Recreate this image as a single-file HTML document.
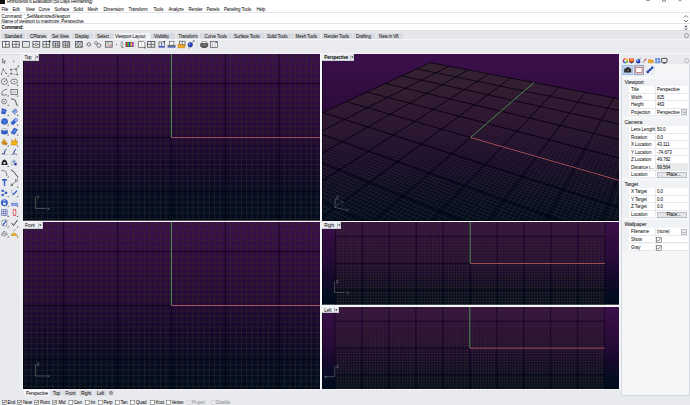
<!DOCTYPE html><html><head><meta charset="utf-8"><style>

*{margin:0;padding:0;box-sizing:border-box}
html,body{width:690px;height:405px;overflow:hidden;background:#e9eaee;font-family:"Liberation Sans",sans-serif;color:#222}
.ab{position:absolute}
.t{position:absolute;white-space:nowrap;font-size:4.3px;line-height:6px;color:#000}
svg{position:absolute;display:block}

</style></head><body>
<div class="ab" style="left:0px;top:0px;width:690px;height:31px;background:#ffffff;"></div>
<div class="ab" style="left:0px;top:0px;width:4.6px;height:3.6px;background:#111;"></div>
<div class="t" style="left:7px;top:-0.7px;font-size:4.5px;color:#000;letter-spacing:-0.16px">Rhinoceros 6 Evaluation (59 Days Remaining)</div>
<svg class="ab" style="left:640px;top:0" width="50" height="4" viewBox="0 0 50 4"><path d="M6 0.3H10" stroke="#333" stroke-width="0.6"/><path d="M22.5 -2V1.2H25.5V-2" stroke="#333" stroke-width="0.6" fill="none"/><path d="M38.6 -1.5L41.4 1.3M41.4 -1.5L38.6 1.3" stroke="#333" stroke-width="0.6"/></svg>
<div class="t" style="left:1.5px;top:6.5px;font-size:4.5px;color:#000;letter-spacing:-0.14px">File</div>
<div class="t" style="left:12.5px;top:6.5px;font-size:4.5px;color:#000;letter-spacing:-0.14px">Edit</div>
<div class="t" style="left:25.5px;top:6.5px;font-size:4.5px;color:#000;letter-spacing:-0.14px">View</div>
<div class="t" style="left:38.5px;top:6.5px;font-size:4.5px;color:#000;letter-spacing:-0.14px">Curve</div>
<div class="t" style="left:54.5px;top:6.5px;font-size:4.5px;color:#000;letter-spacing:-0.14px">Surface</div>
<div class="t" style="left:73.5px;top:6.5px;font-size:4.5px;color:#000;letter-spacing:-0.14px">Solid</div>
<div class="t" style="left:87.5px;top:6.5px;font-size:4.5px;color:#000;letter-spacing:-0.14px">Mesh</div>
<div class="t" style="left:103.5px;top:6.5px;font-size:4.5px;color:#000;letter-spacing:-0.14px">Dimension</div>
<div class="t" style="left:128.5px;top:6.5px;font-size:4.5px;color:#000;letter-spacing:-0.14px">Transform</div>
<div class="t" style="left:153.5px;top:6.5px;font-size:4.5px;color:#000;letter-spacing:-0.14px">Tools</div>
<div class="t" style="left:168.5px;top:6.5px;font-size:4.5px;color:#000;letter-spacing:-0.14px">Analyze</div>
<div class="t" style="left:188.5px;top:6.5px;font-size:4.5px;color:#000;letter-spacing:-0.14px">Render</div>
<div class="t" style="left:206.5px;top:6.5px;font-size:4.5px;color:#000;letter-spacing:-0.14px">Panels</div>
<div class="t" style="left:224.0px;top:6.5px;font-size:4.5px;color:#000;letter-spacing:-0.14px">Paneling Tools</div>
<div class="t" style="left:256.5px;top:6.5px;font-size:4.5px;color:#000;letter-spacing:-0.14px">Help</div>
<div class="ab" style="left:0px;top:11.5px;width:690px;height:0.8px;background:#e3e5ea;"></div>
<div class="t" style="left:1.5px;top:13.7px;font-size:4.5px;color:#000;letter-spacing:-0.12px">Command: '_SetMaximizedViewport</div>
<div class="t" style="left:1.5px;top:19.3px;font-size:4.5px;color:#000;letter-spacing:-0.1px">Name of viewport to maximize: Perspective</div>
<div class="ab" style="left:0px;top:23px;width:690px;height:0.7px;background:#dfe2e8;"></div>
<div class="t" style="left:1.5px;top:24.9px;font-size:4.5px;color:#000;font-weight:bold;letter-spacing:-0.2px">Command:</div>
<div class="ab" style="left:0px;top:30.2px;width:690px;height:0.8px;background:#dde0e6;"></div>
<svg class="ab" style="left:683px;top:13px" width="6" height="17" viewBox="0 0 6 17"><path d="M1 4.5 L3 2.5 L5 4.5 M1 7 L3 9 L5 7" stroke="#555" stroke-width="0.8" fill="none"/><rect x="1.5" y="12" width="3" height="5" fill="#d9dbe0"/><path d="M2 14 L3 13 L4 14 M2 15.5 L3 16.5 L4 15.5" stroke="#333" stroke-width="0.7" fill="none"/></svg>
<div class="ab" style="left:0px;top:31px;width:690px;height:8.5px;background:#e6e7eb;"></div>
<div class="ab" style="left:2px;top:33px;width:23px;height:6.5px;background:#d9dadf;border-radius:1px 1px 0 0"></div>
<div class="t" style="left:4.5px;top:33.9px;font-size:4.5px;color:#000;letter-spacing:-0.12px">Standard</div>
<div class="ab" style="left:27px;top:33px;width:21px;height:6.5px;background:#d9dadf;border-radius:1px 1px 0 0"></div>
<div class="t" style="left:30px;top:33.9px;font-size:4.5px;color:#000;letter-spacing:-0.12px">CPlanes</div>
<div class="ab" style="left:50px;top:33px;width:20px;height:6.5px;background:#d9dadf;border-radius:1px 1px 0 0"></div>
<div class="t" style="left:52px;top:33.9px;font-size:4.5px;color:#000;letter-spacing:-0.12px">Set View</div>
<div class="ab" style="left:72px;top:33px;width:21px;height:6.5px;background:#d9dadf;border-radius:1px 1px 0 0"></div>
<div class="t" style="left:75px;top:33.9px;font-size:4.5px;color:#000;letter-spacing:-0.12px">Display</div>
<div class="ab" style="left:95px;top:33px;width:21px;height:6.5px;background:#d9dadf;border-radius:1px 1px 0 0"></div>
<div class="t" style="left:97px;top:33.9px;font-size:4.5px;color:#000;letter-spacing:-0.12px">Select</div>
<div class="ab" style="left:151px;top:33px;width:24px;height:6.5px;background:#d9dadf;border-radius:1px 1px 0 0"></div>
<div class="t" style="left:154px;top:33.9px;font-size:4.5px;color:#000;letter-spacing:-0.12px">Visibility</div>
<div class="ab" style="left:177px;top:33px;width:21px;height:6.5px;background:#d9dadf;border-radius:1px 1px 0 0"></div>
<div class="t" style="left:178.5px;top:33.9px;font-size:4.5px;color:#000;letter-spacing:-0.12px">Transform</div>
<div class="ab" style="left:200px;top:33px;width:26px;height:6.5px;background:#d9dadf;border-radius:1px 1px 0 0"></div>
<div class="t" style="left:204.5px;top:33.9px;font-size:4.5px;color:#000;letter-spacing:-0.12px">Curve Tools</div>
<div class="ab" style="left:227px;top:33px;width:37px;height:6.5px;background:#d9dadf;border-radius:1px 1px 0 0"></div>
<div class="t" style="left:234px;top:33.9px;font-size:4.5px;color:#000;letter-spacing:-0.12px">Surface Tools</div>
<div class="ab" style="left:265px;top:33px;width:29px;height:6.5px;background:#d9dadf;border-radius:1px 1px 0 0"></div>
<div class="t" style="left:267px;top:33.9px;font-size:4.5px;color:#000;letter-spacing:-0.12px">Solid Tools</div>
<div class="ab" style="left:294.5px;top:33px;width:25.5px;height:6.5px;background:#d9dadf;border-radius:1px 1px 0 0"></div>
<div class="t" style="left:295.5px;top:33.9px;font-size:4.5px;color:#000;letter-spacing:-0.12px">Mesh Tools</div>
<div class="ab" style="left:322px;top:33px;width:30px;height:6.5px;background:#d9dadf;border-radius:1px 1px 0 0"></div>
<div class="t" style="left:324px;top:33.9px;font-size:4.5px;color:#000;letter-spacing:-0.12px">Render Tools</div>
<div class="ab" style="left:353px;top:33px;width:22px;height:6.5px;background:#d9dadf;border-radius:1px 1px 0 0"></div>
<div class="t" style="left:356px;top:33.9px;font-size:4.5px;color:#000;letter-spacing:-0.12px">Drafting</div>
<div class="ab" style="left:377px;top:33px;width:26px;height:6.5px;background:#d9dadf;border-radius:1px 1px 0 0"></div>
<div class="t" style="left:379px;top:33.9px;font-size:4.5px;color:#000;letter-spacing:-0.12px">New in V6</div>
<div class="ab" style="left:113.5px;top:32.5px;width:36.5px;height:7.5px;background:#f3f4f7;border-radius:1px 1px 0 0"></div>
<div class="t" style="left:115px;top:33.9px;font-size:4.5px;color:#000;letter-spacing:-0.12px">Viewport Layout</div>
<div class="ab" style="left:683.5px;top:33px;width:5px;height:5px;border:0.8px solid #9a9ca2;border-radius:50%"></div>
<div class="ab" style="left:0px;top:39.5px;width:690px;height:14px;background:#eaebef;"></div>
<div class="ab" style="left:0px;top:39.2px;width:690px;height:0.7px;background:#f5f6f9;"></div>
<div class="ab" style="left:0px;top:53px;width:690px;height:1px;background:#f6f7f9;"></div>
<svg class="ab" style="left:0;top:0" width="230" height="52" viewBox="0 0 230 52"><rect x="2.4" y="41.6" width="6.8" height="5.6000000000000005" fill="#f4f4f4" stroke="#4a4a4a" stroke-width="0.8"/><line x1="5.6" y1="41.6" x2="5.6" y2="47.2" stroke="#4a4a4a" stroke-width="0.7"/><line x1="5.6" y1="44.4" x2="9.2" y2="44.4" stroke="#4a4a4a" stroke-width="0.7"/><rect x="5" y="41.2" width="2" height="0.8" fill="#3050b0"/><rect x="12.4" y="41.6" width="6.8" height="5.6000000000000005" fill="#f4f4f4" stroke="#4a4a4a" stroke-width="0.8"/><line x1="16" y1="41.6" x2="16" y2="47.2" stroke="#4a4a4a" stroke-width="0.7"/><line x1="12.4" y1="44.4" x2="19.6" y2="44.4" stroke="#4a4a4a" stroke-width="0.7"/><rect x="15" y="41.2" width="2" height="0.8" fill="#3050b0"/><rect x="22.4" y="41.6" width="6.8" height="5.6000000000000005" fill="#f4f4f4" stroke="#4a4a4a" stroke-width="0.8"/><rect x="25" y="41.2" width="2" height="0.8" fill="#3050b0"/><rect x="23" y="42.5" width="6" height="4" fill="#e2e2e2"/><rect x="32.9" y="41.6" width="6.8" height="5.6000000000000005" fill="#f4f4f4" stroke="#4a4a4a" stroke-width="0.8"/><circle cx="36.3" cy="44.4" r="1.2" fill="none" stroke="#4a4a4a" stroke-width="0.7"/><line x1="32.9" y1="44.4" x2="35" y2="44.4" stroke="#4a4a4a" stroke-width="0.7"/><line x1="37.6" y1="44.4" x2="39.7" y2="44.4" stroke="#4a4a4a" stroke-width="0.7"/><rect x="35.5" y="41.2" width="2" height="0.8" fill="#3050b0"/><rect x="42.9" y="41.6" width="6.8" height="5.6000000000000005" fill="#f4f4f4" stroke="#4a4a4a" stroke-width="0.8"/><line x1="46.3" y1="41.6" x2="46.3" y2="47.2" stroke="#4a4a4a" stroke-width="0.7"/><line x1="42.9" y1="44.4" x2="50" y2="44.4" stroke="#4a4a4a" stroke-width="0.7"/><rect x="48.8" y="40.6" width="1.6" height="1.6" fill="#111"/><rect x="45" y="41.2" width="2" height="0.8" fill="#3050b0"/><rect x="52.9" y="41.6" width="6.8" height="5.6000000000000005" fill="#f4f4f4" stroke="#4a4a4a" stroke-width="0.8"/><line x1="55.5" y1="43" x2="55.5" y2="47.2" stroke="#4a4a4a" stroke-width="0.7"/><line x1="57.8" y1="43" x2="57.8" y2="47.2" stroke="#4a4a4a" stroke-width="0.7"/><line x1="52.9" y1="43" x2="59.7" y2="43" stroke="#4a4a4a" stroke-width="0.7"/><line x1="52.9" y1="45.2" x2="59.7" y2="45.2" stroke="#4a4a4a" stroke-width="0.7"/><rect x="53.5" y="41.2" width="2" height="0.8" fill="#3050b0"/><rect x="62.9" y="41.6" width="6.8" height="5.6000000000000005" fill="#f4f4f4" stroke="#4a4a4a" stroke-width="0.8"/><line x1="65.5" y1="43" x2="65.5" y2="47.2" stroke="#4a4a4a" stroke-width="0.7"/><line x1="67.8" y1="43" x2="67.8" y2="47.2" stroke="#4a4a4a" stroke-width="0.7"/><line x1="62.9" y1="43" x2="69.7" y2="43" stroke="#4a4a4a" stroke-width="0.7"/><line x1="62.9" y1="45.2" x2="69.7" y2="45.2" stroke="#4a4a4a" stroke-width="0.7"/><rect x="63.5" y="41.2" width="2" height="0.8" fill="#3050b0"/><rect x="75.4" y="41.6" width="6.8" height="5.6000000000000005" fill="#888" stroke="#4a4a4a" stroke-width="0.8"/><rect x="75.8" y="42.0" width="1.6" height="1.6" fill="#ddd"/><rect x="75.8" y="45.2" width="1.6" height="1.6" fill="#ddd"/><rect x="77.39999999999999" y="43.6" width="1.6" height="1.6" fill="#ddd"/><rect x="79.0" y="42.0" width="1.6" height="1.6" fill="#ddd"/><rect x="79.0" y="45.2" width="1.6" height="1.6" fill="#ddd"/><rect x="80.6" y="43.6" width="1.6" height="1.6" fill="#ddd"/><rect x="78" y="41.2" width="2" height="0.8" fill="#3050b0"/><circle cx="89" cy="44.4" r="1.7" fill="#f0f0f0" stroke="#555" stroke-width="0.8"/><line x1="86.3" y1="44.4" x2="87.3" y2="44.4" stroke="#777" stroke-width="0.7"/><circle cx="96" cy="43" r="1.4" fill="#f0f0f0" stroke="#666" stroke-width="0.7"/><circle cx="98.8" cy="45.5" r="1.9" fill="#f0f0f0" stroke="#555" stroke-width="0.8"/><rect x="105.4" y="41.6" width="6.8" height="5.6000000000000005" fill="#d8d8d8" stroke="#555" stroke-width="0.8"/><circle cx="108" cy="43.3" r="0.6" fill="#3a3" stroke="none" stroke-width="0.7"/><circle cx="109" cy="45.3" r="0.6" fill="#d33" stroke="none" stroke-width="0.7"/><circle cx="111" cy="45.3" r="0.6" fill="#d33" stroke="none" stroke-width="0.7"/><path d="M115.8 44 L117.4 44 L116.6 45.2 Z" fill="#555"/><path d="M121.8 41.4 Q119.6 44.4 121.8 47.4 Q124 44.4 121.8 41.4 Z" fill="#fafafa" stroke="#666" stroke-width="0.6"/><line x1="122.4" y1="47" x2="123.3" y2="48" stroke="#111" stroke-width="0.8"/><rect x="125.5" y="42" width="8" height="5" fill="#444"/><rect x="126.0" y="42.6" width="1.5" height="3.8" fill="#e33"/><rect x="127.5" y="42.6" width="1.5" height="3.8" fill="#3c3"/><rect x="129.0" y="42.6" width="1.5" height="3.8" fill="#33e"/><rect x="130.5" y="42.6" width="1.5" height="3.8" fill="#ec3"/><rect x="132.0" y="42.6" width="1.5" height="3.8" fill="#c3c"/><line x1="135.5" y1="41.5" x2="135.5" y2="47.5" stroke="#c8c9ce" stroke-width="0.5"/><path d="M138.4 41.4 L143.4 41.4 L145 43 L145 47.4 L138.4 47.4 Z" fill="#fafafa" stroke="#555" stroke-width="0.7"/><line x1="141.7" y1="42" x2="141.7" y2="47" stroke="#aaa" stroke-width="0.4"/><rect x="144.4" y="47.4" width="1" height="1" fill="#111"/><rect x="147.6" y="41.6" width="7.2" height="5.6000000000000005" fill="#eee" stroke="#444" stroke-width="0.8"/><line x1="151.2" y1="41.6" x2="151.2" y2="47.2" stroke="#444" stroke-width="0.7"/><line x1="147.6" y1="44.4" x2="154.8" y2="44.4" stroke="#444" stroke-width="0.7"/><rect x="148.5" y="41.2" width="2" height="0.8" fill="#3050b0"/><rect x="159" y="42" width="5.5" height="4.6" fill="#eee" stroke="#555" stroke-width="0.7"/><rect x="158.6" y="46.4" width="6.4" height="1.2" fill="#2a4cc0"/><rect x="163.8" y="41" width="1.2" height="1.2" fill="#111"/><line x1="161.7" y1="42.4" x2="161.7" y2="46.2" stroke="#2a4cc0" stroke-width="0.8"/><rect x="169.3" y="41.6" width="4.6" height="3.6" fill="#fafafa" stroke="#555" stroke-width="0.6"/><rect x="167.6" y="45.2" width="8" height="1.4" fill="#555"/><rect x="167.6" y="46.6" width="8" height="1" fill="#2a4cc0"/><rect x="179.6" y="41.2" width="5.4" height="3.6" fill="#eee" stroke="#444" stroke-width="0.6"/><line x1="182.3" y1="41.2" x2="182.3" y2="44.8" stroke="#444" stroke-width="0.5"/><path d="M178 44.2 L181 44.2 L182 45 L185.5 45 L184.5 47.8 L178 47.8 Z" fill="#f0a81c" stroke="#a86a00" stroke-width="0.4"/><circle cx="190.3" cy="44.8" r="2.3" fill="#1e3fc8" stroke="#0b1a60" stroke-width="0.5"/><circle cx="189.6" cy="44.1" r="0.8" fill="#9bb0ff" stroke="none" stroke-width="0.7"/><line x1="192" y1="42.6" x2="194" y2="40.8" stroke="#555" stroke-width="0.6"/><rect x="193.5" y="40.5" width="1" height="1" fill="#111"/><rect x="188.4" y="47.6" width="0.8" height="0.8" fill="#111"/><line x1="197.2" y1="41.5" x2="197.2" y2="47.5" stroke="#c8c9ce" stroke-width="0.5"/><path d="M202 41.6 L206.6 41.6 L206.6 44 L202 44 Z" fill="#fff" stroke="#555" stroke-width="0.5"/><path d="M200.6 43.8 Q200.4 43.4 201 43.4 L207.4 43.4 Q208 43.4 207.8 43.8 L207.8 46.6 L200.6 46.6 Z" fill="#4a4a4a" stroke="#222" stroke-width="0.4"/><path d="M201.6 45 H206.8" stroke="#ddd" stroke-width="0.5"/><rect x="201.8" y="46.6" width="4.8" height="1.2" fill="#333"/><rect x="210.6" y="41.6" width="6.8" height="5.8" fill="#f6f6f6" stroke="#555" stroke-width="0.7"/><line x1="212.3" y1="42" x2="212.3" y2="47" stroke="#777" stroke-width="0.5"/><line x1="215" y1="42" x2="215" y2="47" stroke="#999" stroke-width="0.5"/><rect x="215.5" y="41.6" width="1.5" height="1.2" fill="#3050b0"/></svg>
<div class="ab" style="left:22px;top:53px;width:599px;height:337px;background:#f4f5f8;"></div>
<svg class="ab" style="left:23px;top:54px" width="297" height="166.5" viewBox="0 0 297 166.5"><defs><linearGradient id="g1" x1="0" y1="0" x2="0" y2="1"><stop offset="0" stop-color="rgb(60, 16, 76)"/><stop offset="0.25" stop-color="rgb(48, 12, 62)"/><stop offset="0.47" stop-color="rgb(38, 11, 55)"/><stop offset="0.65" stop-color="rgb(22, 8, 45)"/><stop offset="0.88" stop-color="rgb(4, 13, 32)"/><stop offset="1.0" stop-color="rgb(0, 12, 30)"/></linearGradient></defs><rect x="0" y="0" width="297" height="166.5" fill="url(#g1)"/><path d="M2.87 0.00V166.50M8.26 0.00V166.50M13.65 0.00V166.50M19.04 0.00V166.50M24.43 0.00V166.50M29.82 0.00V166.50M35.21 0.00V166.50M45.99 0.00V166.50M51.38 0.00V166.50M56.77 0.00V166.50M62.16 0.00V166.50M67.55 0.00V166.50M72.94 0.00V166.50M78.33 0.00V166.50M83.72 0.00V166.50M89.11 0.00V166.50M99.89 0.00V166.50M105.28 0.00V166.50M110.67 0.00V166.50M116.06 0.00V166.50M121.45 0.00V166.50M126.84 0.00V166.50M132.23 0.00V166.50M137.62 0.00V166.50M143.01 0.00V166.50M153.79 0.00V166.50M159.18 0.00V166.50M164.57 0.00V166.50M169.96 0.00V166.50M175.35 0.00V166.50M180.74 0.00V166.50M186.13 0.00V166.50M191.52 0.00V166.50M196.91 0.00V166.50M207.69 0.00V166.50M213.08 0.00V166.50M218.47 0.00V166.50M223.86 0.00V166.50M229.25 0.00V166.50M234.64 0.00V166.50M240.03 0.00V166.50M245.42 0.00V166.50M250.81 0.00V166.50M261.59 0.00V166.50M266.98 0.00V166.50M272.37 0.00V166.50M277.76 0.00V166.50M283.15 0.00V166.50M288.54 0.00V166.50M293.93 0.00V166.50M0.00 164.45H297.00M0.00 159.06H297.00M0.00 153.67H297.00M0.00 148.28H297.00M0.00 142.89H297.00M0.00 132.11H297.00M0.00 126.72H297.00M0.00 121.33H297.00M0.00 115.94H297.00M0.00 110.55H297.00M0.00 105.16H297.00M0.00 99.77H297.00M0.00 94.38H297.00M0.00 88.99H297.00M0.00 78.21H297.00M0.00 72.82H297.00M0.00 67.43H297.00M0.00 62.04H297.00M0.00 56.65H297.00M0.00 51.26H297.00M0.00 45.87H297.00M0.00 40.48H297.00M0.00 35.09H297.00M0.00 24.31H297.00M0.00 18.92H297.00M0.00 13.53H297.00M0.00 8.14H297.00M0.00 2.75H297.00" stroke="rgb(52,45,40)" stroke-width="0.5" fill="none"/><path d="M40.60 0.00V166.50M94.50 0.00V166.50M148.40 0.00V166.50M202.30 0.00V166.50M256.20 0.00V166.50M0.00 137.50H297.00M0.00 83.60H297.00M0.00 29.70H297.00" stroke="rgb(4,4,10)" stroke-width="0.62" fill="none"/><path d="M148.40 0V83.60" stroke="rgb(95,185,95)" stroke-width="0.8"/><path d="M148.40 83.60H297" stroke="rgb(205,105,105)" stroke-width="0.8"/><path d="M12.399999999999999 142.6V154.5H24" stroke="rgb(110,110,115)" stroke-width="0.6" fill="none"/><path d="M14 141.6L15.1 143.0M16.2 141.6L14.6 144.8" stroke="rgb(125,125,130)" stroke-width="0.5" fill="none"/><path d="M24.5 153.6L26.7 156M26.7 153.6L24.5 156" stroke="rgb(125,125,130)" stroke-width="0.5" fill="none"/><rect x="0" y="0" width="0.8" height="166.5" fill="rgba(0,0,0,0.6)"/><rect x="0" y="165.7" width="297" height="0.8" fill="rgba(0,0,0,0.7)"/></svg>
<svg class="ab" style="left:23px;top:222px" width="297" height="167" viewBox="0 0 297 167"><defs><linearGradient id="g2" x1="0" y1="0" x2="0" y2="1"><stop offset="0" stop-color="rgb(60, 16, 76)"/><stop offset="0.25" stop-color="rgb(48, 12, 62)"/><stop offset="0.47" stop-color="rgb(38, 11, 55)"/><stop offset="0.65" stop-color="rgb(22, 8, 45)"/><stop offset="0.88" stop-color="rgb(4, 13, 32)"/><stop offset="1.0" stop-color="rgb(0, 12, 30)"/></linearGradient></defs><rect x="0" y="0" width="297" height="167" fill="url(#g2)"/><path d="M2.87 0.00V167.00M8.26 0.00V167.00M13.65 0.00V167.00M19.04 0.00V167.00M24.43 0.00V167.00M29.82 0.00V167.00M35.21 0.00V167.00M45.99 0.00V167.00M51.38 0.00V167.00M56.77 0.00V167.00M62.16 0.00V167.00M67.55 0.00V167.00M72.94 0.00V167.00M78.33 0.00V167.00M83.72 0.00V167.00M89.11 0.00V167.00M99.89 0.00V167.00M105.28 0.00V167.00M110.67 0.00V167.00M116.06 0.00V167.00M121.45 0.00V167.00M126.84 0.00V167.00M132.23 0.00V167.00M137.62 0.00V167.00M143.01 0.00V167.00M153.79 0.00V167.00M159.18 0.00V167.00M164.57 0.00V167.00M169.96 0.00V167.00M175.35 0.00V167.00M180.74 0.00V167.00M186.13 0.00V167.00M191.52 0.00V167.00M196.91 0.00V167.00M207.69 0.00V167.00M213.08 0.00V167.00M218.47 0.00V167.00M223.86 0.00V167.00M229.25 0.00V167.00M234.64 0.00V167.00M240.03 0.00V167.00M245.42 0.00V167.00M250.81 0.00V167.00M261.59 0.00V167.00M266.98 0.00V167.00M272.37 0.00V167.00M277.76 0.00V167.00M283.15 0.00V167.00M288.54 0.00V167.00M293.93 0.00V167.00M0.00 164.35H297.00M0.00 158.96H297.00M0.00 153.57H297.00M0.00 148.18H297.00M0.00 142.79H297.00M0.00 132.01H297.00M0.00 126.62H297.00M0.00 121.23H297.00M0.00 115.84H297.00M0.00 110.45H297.00M0.00 105.06H297.00M0.00 99.67H297.00M0.00 94.28H297.00M0.00 88.89H297.00M0.00 78.11H297.00M0.00 72.72H297.00M0.00 67.33H297.00M0.00 61.94H297.00M0.00 56.55H297.00M0.00 51.16H297.00M0.00 45.77H297.00M0.00 40.38H297.00M0.00 34.99H297.00M0.00 24.21H297.00M0.00 18.82H297.00M0.00 13.43H297.00M0.00 8.04H297.00M0.00 2.65H297.00" stroke="rgb(52,45,40)" stroke-width="0.5" fill="none"/><path d="M40.60 0.00V167.00M94.50 0.00V167.00M148.40 0.00V167.00M202.30 0.00V167.00M256.20 0.00V167.00M0.00 137.40H297.00M0.00 83.50H297.00M0.00 29.60H297.00" stroke="rgb(4,4,10)" stroke-width="0.62" fill="none"/><path d="M148.40 0V83.50" stroke="rgb(95,185,95)" stroke-width="0.8"/><path d="M148.40 83.50H297" stroke="rgb(205,105,105)" stroke-width="0.8"/><path d="M12.399999999999999 142V154H24" stroke="rgb(110,110,115)" stroke-width="0.6" fill="none"/><path d="M14 141.1H16.2L14 143.5H16.2" stroke="rgb(125,125,130)" stroke-width="0.5" fill="none"/><path d="M24.5 153.1L26.7 155.5M26.7 153.1L24.5 155.5" stroke="rgb(125,125,130)" stroke-width="0.5" fill="none"/><rect x="0" y="0" width="0.8" height="167" fill="rgba(0,0,0,0.6)"/><rect x="0" y="166.2" width="297" height="0.8" fill="rgba(0,0,0,0.7)"/></svg>
<svg class="ab" style="left:322px;top:222px" width="297" height="82.5" viewBox="0 0 297 82.5"><defs><linearGradient id="g3" x1="0" y1="0" x2="0" y2="1"><stop offset="0" stop-color="rgb(60, 16, 76)"/><stop offset="0.25" stop-color="rgb(48, 12, 62)"/><stop offset="0.47" stop-color="rgb(38, 11, 55)"/><stop offset="0.65" stop-color="rgb(22, 8, 45)"/><stop offset="0.88" stop-color="rgb(4, 13, 32)"/><stop offset="1.0" stop-color="rgb(0, 12, 30)"/></linearGradient></defs><rect x="0" y="0" width="297" height="82.5" fill="url(#g3)"/><path d="M16.15 0.00V82.50M18.84 0.00V82.50M21.53 0.00V82.50M24.23 0.00V82.50M26.92 0.00V82.50M29.62 0.00V82.50M32.31 0.00V82.50M35.01 0.00V82.50M37.70 0.00V82.50M43.09 0.00V82.50M45.79 0.00V82.50M48.48 0.00V82.50M51.18 0.00V82.50M53.88 0.00V82.50M56.57 0.00V82.50M59.27 0.00V82.50M61.96 0.00V82.50M64.65 0.00V82.50M70.04 0.00V82.50M72.74 0.00V82.50M75.43 0.00V82.50M78.13 0.00V82.50M80.82 0.00V82.50M83.52 0.00V82.50M86.21 0.00V82.50M88.91 0.00V82.50M91.60 0.00V82.50M96.99 0.00V82.50M99.69 0.00V82.50M102.38 0.00V82.50M105.08 0.00V82.50M107.77 0.00V82.50M110.47 0.00V82.50M113.16 0.00V82.50M115.86 0.00V82.50M118.55 0.00V82.50M123.94 0.00V82.50M126.64 0.00V82.50M129.33 0.00V82.50M132.03 0.00V82.50M134.72 0.00V82.50M137.42 0.00V82.50M140.11 0.00V82.50M142.81 0.00V82.50M145.50 0.00V82.50M150.89 0.00V82.50M153.59 0.00V82.50M156.28 0.00V82.50M158.98 0.00V82.50M161.67 0.00V82.50M164.37 0.00V82.50M167.06 0.00V82.50M169.76 0.00V82.50M172.45 0.00V82.50M177.84 0.00V82.50M180.54 0.00V82.50M183.23 0.00V82.50M185.93 0.00V82.50M188.62 0.00V82.50M191.32 0.00V82.50M194.01 0.00V82.50M196.71 0.00V82.50M199.40 0.00V82.50M204.79 0.00V82.50M207.49 0.00V82.50M210.19 0.00V82.50M212.88 0.00V82.50M215.57 0.00V82.50M218.27 0.00V82.50M220.96 0.00V82.50M223.66 0.00V82.50M226.35 0.00V82.50M231.75 0.00V82.50M234.44 0.00V82.50M237.13 0.00V82.50M239.83 0.00V82.50M242.52 0.00V82.50M245.22 0.00V82.50M247.91 0.00V82.50M250.61 0.00V82.50M253.30 0.00V82.50M258.69 0.00V82.50M261.39 0.00V82.50M264.08 0.00V82.50M266.78 0.00V82.50M269.47 0.00V82.50M272.17 0.00V82.50M274.87 0.00V82.50M277.56 0.00V82.50M280.25 0.00V82.50M13.45 81.82H282.95M13.45 79.13H282.95M13.45 76.43H282.95M13.45 73.74H282.95M13.45 71.04H282.95M13.45 65.65H282.95M13.45 62.96H282.95M13.45 60.26H282.95M13.45 57.57H282.95M13.45 54.87H282.95M13.45 52.18H282.95M13.45 49.48H282.95M13.45 46.79H282.95M13.45 44.09H282.95M13.45 38.70H282.95M13.45 36.01H282.95M13.45 33.31H282.95M13.45 30.62H282.95M13.45 27.92H282.95M13.45 25.23H282.95M13.45 22.53H282.95M13.45 19.84H282.95M13.45 17.14H282.95M13.45 11.75H282.95M13.45 9.06H282.95M13.45 6.36H282.95M13.45 3.67H282.95M13.45 0.97H282.95" stroke="rgb(52,45,40)" stroke-width="0.5" fill="none"/><path d="M13.45 0.00V82.50M40.40 0.00V82.50M67.35 0.00V82.50M94.30 0.00V82.50M121.25 0.00V82.50M148.20 0.00V82.50M175.15 0.00V82.50M202.10 0.00V82.50M229.05 0.00V82.50M256.00 0.00V82.50M282.95 0.00V82.50M13.45 68.35H282.95M13.45 41.40H282.95M13.45 14.45H282.95" stroke="rgb(4,4,10)" stroke-width="0.5" fill="none"/><path d="M148.20 0V41.40" stroke="rgb(95,185,95)" stroke-width="0.8"/><path d="M148.20 41.40H282.95" stroke="rgb(205,105,105)" stroke-width="0.8"/><path d="M12.600000000000023 59.69999999999999V70.39999999999998H22.600000000000023" stroke="rgb(110,110,115)" stroke-width="0.6" fill="none"/><path d="M14 58.6H16.2L14 61H16.2" stroke="rgb(125,125,130)" stroke-width="0.5" fill="none"/><path d="M24.5 69.6L25.6 71.0M26.7 69.6L25.1 72.8" stroke="rgb(125,125,130)" stroke-width="0.5" fill="none"/><rect x="0" y="0" width="0.8" height="82.5" fill="rgba(0,0,0,0.6)"/><rect x="0" y="81.7" width="297" height="0.8" fill="rgba(0,0,0,0.7)"/></svg>
<svg class="ab" style="left:322px;top:306.5px" width="297" height="82.5" viewBox="0 0 297 82.5"><defs><linearGradient id="g4" x1="0" y1="0" x2="0" y2="1"><stop offset="0" stop-color="rgb(60, 16, 76)"/><stop offset="0.25" stop-color="rgb(48, 12, 62)"/><stop offset="0.47" stop-color="rgb(38, 11, 55)"/><stop offset="0.65" stop-color="rgb(22, 8, 45)"/><stop offset="0.88" stop-color="rgb(4, 13, 32)"/><stop offset="1.0" stop-color="rgb(0, 12, 30)"/></linearGradient></defs><rect x="0" y="0" width="297" height="82.5" fill="url(#g4)"/><path d="M15.75 0.00V82.50M18.44 0.00V82.50M21.14 0.00V82.50M23.83 0.00V82.50M26.53 0.00V82.50M29.22 0.00V82.50M31.92 0.00V82.50M34.61 0.00V82.50M37.31 0.00V82.50M42.70 0.00V82.50M45.39 0.00V82.50M48.09 0.00V82.50M50.78 0.00V82.50M53.48 0.00V82.50M56.17 0.00V82.50M58.87 0.00V82.50M61.56 0.00V82.50M64.26 0.00V82.50M69.65 0.00V82.50M72.34 0.00V82.50M75.04 0.00V82.50M77.73 0.00V82.50M80.43 0.00V82.50M83.12 0.00V82.50M85.82 0.00V82.50M88.51 0.00V82.50M91.21 0.00V82.50M96.60 0.00V82.50M99.29 0.00V82.50M101.99 0.00V82.50M104.68 0.00V82.50M107.38 0.00V82.50M110.07 0.00V82.50M112.77 0.00V82.50M115.46 0.00V82.50M118.16 0.00V82.50M123.55 0.00V82.50M126.24 0.00V82.50M128.94 0.00V82.50M131.63 0.00V82.50M134.33 0.00V82.50M137.02 0.00V82.50M139.72 0.00V82.50M142.41 0.00V82.50M145.11 0.00V82.50M150.50 0.00V82.50M153.19 0.00V82.50M155.89 0.00V82.50M158.58 0.00V82.50M161.28 0.00V82.50M163.97 0.00V82.50M166.67 0.00V82.50M169.36 0.00V82.50M172.06 0.00V82.50M177.45 0.00V82.50M180.14 0.00V82.50M182.84 0.00V82.50M185.53 0.00V82.50M188.23 0.00V82.50M190.92 0.00V82.50M193.62 0.00V82.50M196.31 0.00V82.50M199.00 0.00V82.50M204.40 0.00V82.50M207.09 0.00V82.50M209.79 0.00V82.50M212.48 0.00V82.50M215.18 0.00V82.50M217.87 0.00V82.50M220.56 0.00V82.50M223.26 0.00V82.50M225.96 0.00V82.50M231.35 0.00V82.50M234.04 0.00V82.50M236.74 0.00V82.50M239.43 0.00V82.50M242.12 0.00V82.50M244.82 0.00V82.50M247.51 0.00V82.50M250.21 0.00V82.50M252.91 0.00V82.50M258.30 0.00V82.50M260.99 0.00V82.50M263.69 0.00V82.50M266.38 0.00V82.50M269.07 0.00V82.50M271.77 0.00V82.50M274.47 0.00V82.50M277.16 0.00V82.50M279.86 0.00V82.50M13.05 81.53H282.55M13.05 78.83H282.55M13.05 76.14H282.55M13.05 73.44H282.55M13.05 70.75H282.55M13.05 65.36H282.55M13.05 62.66H282.55M13.05 59.97H282.55M13.05 57.27H282.55M13.05 54.58H282.55M13.05 51.88H282.55M13.05 49.19H282.55M13.05 46.49H282.55M13.05 43.80H282.55M13.05 38.41H282.55M13.05 35.71H282.55M13.05 33.02H282.55M13.05 30.32H282.55M13.05 27.63H282.55M13.05 24.93H282.55M13.05 22.24H282.55M13.05 19.54H282.55M13.05 16.85H282.55M13.05 11.46H282.55M13.05 8.76H282.55M13.05 6.07H282.55M13.05 3.37H282.55M13.05 0.68H282.55" stroke="rgb(52,45,40)" stroke-width="0.5" fill="none"/><path d="M13.05 0.00V82.50M40.00 0.00V82.50M66.95 0.00V82.50M93.90 0.00V82.50M120.85 0.00V82.50M147.80 0.00V82.50M174.75 0.00V82.50M201.70 0.00V82.50M228.65 0.00V82.50M255.60 0.00V82.50M282.55 0.00V82.50M13.05 68.05H282.55M13.05 41.10H282.55M13.05 14.15H282.55" stroke="rgb(4,4,10)" stroke-width="0.5" fill="none"/><path d="M147.80 0V41.10" stroke="rgb(95,185,95)" stroke-width="0.8"/><path d="M147.80 41.10H282.55" stroke="rgb(205,105,105)" stroke-width="0.8"/><path d="M12.800000000000011 58.89999999999998V69.69999999999999H2.1999999999999886" stroke="rgb(110,110,115)" stroke-width="0.6" fill="none"/><path d="M14.5 58.1H16.7L14.5 60.5H16.7" stroke="rgb(125,125,130)" stroke-width="0.5" fill="none"/><path d="M2.5 68.6L3.6 70.0M4.7 68.6L3.1 71.8" stroke="rgb(125,125,130)" stroke-width="0.5" fill="none"/><rect x="0" y="0" width="0.8" height="82.5" fill="rgba(0,0,0,0.6)"/><rect x="0" y="81.7" width="297" height="0.8" fill="rgba(0,0,0,0.7)"/></svg>
<svg class="ab" style="left:322px;top:54px" width="297" height="167" viewBox="0 0 297 167"><defs><linearGradient id="g5" x1="0" y1="0" x2="0" y2="1"><stop offset="0" stop-color="rgb(60, 16, 76)"/><stop offset="0.25" stop-color="rgb(48, 12, 62)"/><stop offset="0.47" stop-color="rgb(38, 11, 55)"/><stop offset="0.65" stop-color="rgb(22, 8, 45)"/><stop offset="0.88" stop-color="rgb(4, 13, 32)"/><stop offset="1.0" stop-color="rgb(0, 12, 30)"/></linearGradient></defs><rect x="0" y="0" width="297" height="167" fill="url(#g5)"/><path d="M-133.21 122.77L110.18 8.98M-130.78 119.41L307.42 368.49M-131.05 124.03L111.98 9.33M-126.28 117.33L308.73 359.80M-128.86 125.30L113.80 9.68M-121.86 115.28L309.99 351.41M-126.65 126.58L115.62 10.03M-117.51 113.27L311.21 343.31M-124.42 127.87L117.45 10.38M-113.24 111.29L312.38 335.49M-122.16 129.18L119.30 10.74M-109.04 109.34L313.52 327.92M-119.88 130.51L121.15 11.09M-104.92 107.43L314.62 320.61M-117.57 131.84L123.02 11.45M-100.86 105.55L315.68 313.53M-115.24 133.20L124.89 11.81M-96.87 103.71L316.71 306.68M-110.50 135.94L128.67 12.54M-89.08 100.10L318.68 293.61M-108.09 137.34L130.58 12.90M-85.29 98.34L319.62 287.37M-105.66 138.75L132.50 13.27M-81.55 96.61L320.52 281.32M-103.19 140.18L134.42 13.64M-77.87 94.91L321.41 275.45M-100.70 141.63L136.36 14.02M-74.25 93.23L322.26 269.74M-98.18 143.09L138.31 14.39M-70.69 91.58L323.10 264.21M-95.64 144.56L140.28 14.77M-67.18 89.96L323.91 258.82M-93.06 146.06L142.25 15.15M-63.73 88.36L324.69 253.59M-90.45 147.57L144.23 15.53M-60.33 86.78L325.46 248.50M-85.15 150.64L148.24 16.30M-53.68 83.70L326.93 238.73M-82.45 152.21L150.26 16.69M-50.43 82.20L327.63 234.03M-79.73 153.79L152.29 17.08M-47.23 80.71L328.32 229.46M-76.96 155.39L154.33 17.47M-44.08 79.25L328.99 225.01M-74.17 157.01L156.38 17.86M-40.97 77.81L329.64 220.67M-71.34 158.65L158.45 18.26M-37.91 76.40L330.28 216.44M-68.48 160.31L160.53 18.66M-34.89 75.00L330.90 212.31M-65.58 161.99L162.62 19.06M-31.91 73.62L331.50 208.29M-62.65 163.69L164.72 19.47M-28.98 72.26L332.09 204.36M-56.68 167.15L168.97 20.28M-23.24 69.60L333.23 196.78M-53.64 168.92L171.11 20.69M-20.43 68.30L333.78 193.12M-50.56 170.70L173.26 21.11M-17.66 67.02L334.32 189.54M-47.44 172.51L175.43 21.52M-14.92 65.75L334.84 186.05M-44.28 174.34L177.61 21.94M-12.23 64.50L335.36 182.64M-41.09 176.20L179.80 22.36M-9.57 63.27L335.86 179.30M-37.85 178.07L182.01 22.79M-6.94 62.05L336.35 176.04M-34.57 179.98L184.23 23.21M-4.35 60.86L336.83 172.84M-31.25 181.90L186.46 23.64M-1.80 59.67L337.30 169.72M-24.47 185.83L190.97 24.51M3.21 57.35L338.21 163.67M-21.02 187.84L193.25 24.95M5.67 56.22L338.65 160.74M-17.51 189.87L195.53 25.39M8.09 55.09L339.08 157.87M-13.97 191.92L197.84 25.83M10.48 53.98L339.50 155.05M-10.37 194.01L200.15 26.27M12.84 52.89L339.92 152.30M-6.73 196.12L202.49 26.72M15.18 51.81L340.32 149.60M-3.03 198.27L204.83 27.17M17.48 50.74L340.72 146.95M0.71 200.44L207.19 27.63M19.75 49.69L341.11 144.36M4.51 202.64L209.57 28.08M22.00 48.65L341.49 141.81M12.27 207.14L214.37 29.01M26.41 46.61L342.23 136.87M16.23 209.43L216.79 29.47M28.57 45.61L342.59 134.47M20.24 211.76L219.23 29.94M30.71 44.62L342.95 132.12M24.31 214.12L221.68 30.41M32.82 43.64L343.30 129.80M28.45 216.52L224.15 30.89M34.91 42.67L343.64 127.53M32.64 218.95L226.63 31.36M36.97 41.72L343.97 125.30M36.89 221.42L229.13 31.84M39.01 40.77L344.30 123.12M41.21 223.92L231.65 32.33M41.02 39.84L344.62 120.97M45.59 226.46L234.18 32.81M43.01 38.92L344.94 118.85M54.55 231.66L239.30 33.80M46.92 37.11L345.56 114.74M59.14 234.32L241.88 34.29M48.84 36.22L345.86 112.74M63.79 237.01L244.48 34.79M50.74 35.34L346.16 110.77M68.52 239.75L247.10 35.30M52.62 34.47L346.45 108.84M73.31 242.54L249.73 35.80M54.47 33.61L346.73 106.93M78.19 245.36L252.39 36.31M56.31 32.76L347.01 105.06M83.14 248.24L255.06 36.83M58.12 31.92L347.29 103.22M88.17 251.15L257.74 37.34M59.92 31.09L347.56 101.41M93.28 254.12L260.45 37.86M61.69 30.27L347.83 99.63M103.76 260.19L265.92 38.91M65.18 28.65L348.35 96.16M109.12 263.30L268.68 39.44M66.90 27.85L348.61 94.46M114.58 266.47L271.46 39.98M68.60 27.07L348.86 92.79M120.13 269.68L274.26 40.51M70.28 26.29L349.11 91.15M125.77 272.95L277.07 41.06M71.94 25.52L349.35 89.53M131.50 276.28L279.91 41.60M73.58 24.76L349.59 87.94M137.34 279.66L282.77 42.15M75.21 24.00L349.82 86.37M143.27 283.11L285.65 42.70M76.82 23.26L350.06 84.82M149.32 286.61L288.54 43.26M78.41 22.52L350.29 83.30M161.72 293.80L294.40 44.39M81.55 21.07L350.73 80.33M168.09 297.50L297.36 44.95M83.09 20.35L350.95 78.87M174.57 301.26L300.34 45.53M84.62 19.65L351.17 77.44M181.18 305.08L303.34 46.10M86.13 18.95L351.38 76.02M187.90 308.98L306.36 46.68M87.63 18.25L351.59 74.63M194.75 312.96L309.40 47.27M89.11 17.57L351.79 73.26M201.73 317.00L312.47 47.86M90.58 16.89L352.00 71.91M208.84 321.13L315.55 48.45M92.03 16.21L352.20 70.57M216.09 325.33L318.66 49.05M93.47 15.55L352.40 69.26M231.01 333.98L324.95 50.26M96.30 14.24L352.78 66.68M238.69 338.44L328.12 50.87M97.70 13.59L352.97 65.42M246.53 342.98L331.32 51.48M99.08 12.95L353.16 64.17M254.52 347.62L334.55 52.10M100.45 12.32L353.34 62.95M262.67 352.34L337.80 52.73M101.80 11.69L353.53 61.74M271.00 357.17L341.07 53.35M103.14 11.07L353.71 60.54M279.49 362.10L344.36 53.99M104.47 10.45L353.88 59.36M288.16 367.13L347.69 54.63M105.79 9.84L354.06 58.20M297.02 372.26L351.03 55.27M107.09 9.24L354.23 57.05" stroke="rgb(52,45,40)" stroke-width="0.5" fill="none"/><path d="M-135.36 121.53L108.38 8.64M-135.36 121.53L306.07 377.51M-112.88 134.56L126.78 12.17M-92.94 101.89L317.71 300.04M-87.82 149.10L146.23 15.91M-56.98 85.23L326.20 243.55M-59.68 165.41L166.84 19.87M-26.09 70.92L332.67 200.52M-27.88 183.86L188.71 24.08M0.72 58.50L337.76 166.66M8.36 204.87L211.96 28.54M24.22 47.62L341.87 139.32M50.04 229.04L236.73 33.30M44.97 38.01L345.25 116.78M98.48 257.13L263.17 38.39M63.45 29.45L348.09 97.88M155.46 290.17L291.46 43.82M79.99 21.79L350.51 81.80M223.48 329.62L321.79 49.65M94.89 14.89L352.59 67.96M306.07 377.51L354.40 55.92M108.38 8.64L354.40 55.92" stroke="rgb(4,4,10)" stroke-width="0.8" fill="none"/><path d="M148.50 83.50L211.96 28.54" stroke="rgb(95,185,95)" stroke-width="0.8"/><path d="M148.50 83.50L341.87 139.32" stroke="rgb(205,105,105)" stroke-width="0.8"/><path d="M13.5 144.7L12.699999999999989 153.3L23.80000000000001 155.9M12.699999999999989 153.3L18.69999999999999 148.8" stroke="rgb(110,110,115)" stroke-width="0.6" fill="none"/><path d="M14.199999999999989 142.6H16.399999999999988L14.199999999999989 145H16.399999999999988" stroke="rgb(125,125,130)" stroke-width="0.5" fill="none"/><path d="M19.19999999999999 147.1L20.29999999999999 148.5M21.399999999999988 147.1L19.79999999999999 150.3" stroke="rgb(125,125,130)" stroke-width="0.5" fill="none"/><path d="M24 155.1L26.2 157.5M26.2 155.1L24 157.5" stroke="rgb(125,125,130)" stroke-width="0.5" fill="none"/><rect x="0" y="0" width="0.8" height="167" fill="rgba(0,0,0,0.6)"/><rect x="0" y="166.2" width="297" height="0.8" fill="rgba(0,0,0,0.7)"/></svg>
<div class="ab" style="left:22.3px;top:54px;width:17.2px;height:6.6px;background:#eceef2;border-right:0.5px solid #c9ccd3;border-bottom:0.5px solid #c9ccd3"></div>
<div class="t" style="left:24.6px;top:55.1px;font-size:4.5px;color:#000;letter-spacing:-0.13px;">Top</div>
<div class="ab" style="left:35.1px;top:55px;width:0.45px;height:4.6px;background:#b4b8c0"></div>
<svg class="ab" style="left:36.2px;top:56.2px" width="3" height="3" viewBox="0 0 3 3"><path d="M0.2 0.5 L2.4 0.5 L1.3 2.0 Z" fill="#000"/></svg>
<div class="ab" style="left:322px;top:54px;width:32.2px;height:6.6px;background:#eceef2;border-right:0.5px solid #c9ccd3;border-bottom:0.5px solid #c9ccd3"></div>
<div class="t" style="left:324.3px;top:55.1px;font-size:4.5px;color:#000;font-weight:bold;letter-spacing:-0.13px;">Perspective</div>
<div class="ab" style="left:349.8px;top:55px;width:0.45px;height:4.6px;background:#b4b8c0"></div>
<svg class="ab" style="left:350.9px;top:56.2px" width="3" height="3" viewBox="0 0 3 3"><path d="M0.2 0.5 L2.4 0.5 L1.3 2.0 Z" fill="#000"/></svg>
<div class="ab" style="left:22.6px;top:222px;width:20px;height:6.6px;background:#eceef2;border-right:0.5px solid #c9ccd3;border-bottom:0.5px solid #c9ccd3"></div>
<div class="t" style="left:24.900000000000002px;top:223.1px;font-size:4.5px;color:#000;letter-spacing:-0.13px;">Front</div>
<div class="ab" style="left:38.2px;top:223px;width:0.45px;height:4.6px;background:#b4b8c0"></div>
<svg class="ab" style="left:39.300000000000004px;top:224.2px" width="3" height="3" viewBox="0 0 3 3"><path d="M0.2 0.5 L2.4 0.5 L1.3 2.0 Z" fill="#000"/></svg>
<div class="ab" style="left:322px;top:222px;width:19.3px;height:6.6px;background:#eceef2;border-right:0.5px solid #c9ccd3;border-bottom:0.5px solid #c9ccd3"></div>
<div class="t" style="left:324.3px;top:223.1px;font-size:4.5px;color:#000;letter-spacing:-0.13px;">Right</div>
<div class="ab" style="left:336.90000000000003px;top:223px;width:0.45px;height:4.6px;background:#b4b8c0"></div>
<svg class="ab" style="left:338.0px;top:224.2px" width="3" height="3" viewBox="0 0 3 3"><path d="M0.2 0.5 L2.4 0.5 L1.3 2.0 Z" fill="#000"/></svg>
<div class="ab" style="left:322px;top:306.5px;width:16.5px;height:6.6px;background:#eceef2;border-right:0.5px solid #c9ccd3;border-bottom:0.5px solid #c9ccd3"></div>
<div class="t" style="left:324.3px;top:307.6px;font-size:4.5px;color:#000;letter-spacing:-0.13px;">Left</div>
<div class="ab" style="left:334.1px;top:307.5px;width:0.45px;height:4.6px;background:#b4b8c0"></div>
<svg class="ab" style="left:335.2px;top:308.7px" width="3" height="3" viewBox="0 0 3 3"><path d="M0.2 0.5 L2.4 0.5 L1.3 2.0 Z" fill="#000"/></svg>
<div class="ab" style="left:0px;top:54.2px;width:20.5px;height:0.6px;background:#d8dae0;"></div>
<div class="ab" style="left:20.2px;top:54px;width:1px;height:336px;background:#f3f4f7;"></div>
<svg class="ab" style="left:0;top:0" width="21" height="245" viewBox="0 0 21 245"><path d="M2.4 58.8L2.4 62.8L3.4 61.9L4.3 63.5L4.9 63.2L4.1 61.6L5.5 61.5Z" fill="#f4f4f4" stroke="#333" stroke-width="0.55"/><circle cx="13.6" cy="61.3" r="0.7" fill="#777"/><path d="M1.5 74L3.2 69L6.2 73.5" stroke="#555" stroke-width="0.5" fill="none"/><circle cx="1.5" cy="74" r="0.6" fill="#222"/><circle cx="3.2" cy="69" r="0.6" fill="#222"/><circle cx="6.2" cy="73.5" r="0.6" fill="#222"/><path d="M11 69.5L16 69.2L17.4 74.6L11 73.8Z" stroke="#666" stroke-width="0.45" fill="none"/><path d="M16 69.2L18.4 66" stroke="#555" stroke-width="0.5"/><circle cx="11" cy="69.5" r="0.7" fill="#222"/><circle cx="16" cy="69.2" r="0.7" fill="#222"/><circle cx="17.4" cy="74.6" r="0.7" fill="#222"/><circle cx="11" cy="73.8" r="0.7" fill="#222"/><circle cx="18.4" cy="66" r="0.6" fill="#222"/><path d="M8.6 75L8.6 76.4L7.2 76.4Z" fill="#333"/><circle cx="4.4" cy="81.5" r="3" stroke="#3a3a3a" stroke-width="0.6" fill="none"/><circle cx="4.4" cy="81.5" r="0.5" fill="#333"/><path d="M4.4 81.5L6.5 79.5" stroke="#333" stroke-width="0.5"/><ellipse cx="14.2" cy="81.5" rx="3.4" ry="2.4" stroke="#3a3a3a" stroke-width="0.6" fill="none"/><circle cx="14.2" cy="81.5" r="0.6" fill="#333"/><path d="M8.6 84.5L8.6 85.9L7.2 85.9Z" fill="#333"/><path d="M18.1 84.5L18.1 85.9L16.7 85.9Z" fill="#333"/><path d="M1.6 95Q2 89 7.2 89.4M1.6 95L7.2 95" stroke="#3a3a3a" stroke-width="0.6" fill="none"/><rect x="11" y="89.6" width="6.6" height="4.8" stroke="#3a3a3a" stroke-width="0.6" fill="none"/><path d="M12.3 92H16.3" stroke="#666" stroke-width="0.5"/><path d="M8.6 95L8.6 96.4L7.2 96.4Z" fill="#333"/><path d="M18.1 95L18.1 96.4L16.7 96.4Z" fill="#333"/><circle cx="4.2" cy="101.5" r="2.4" stroke="#3a3a3a" stroke-width="0.6" fill="none"/><circle cx="4.2" cy="101.5" r="0.6" fill="#333"/><path d="M11 99.0Q16 98.0 16.5 105.0" stroke="#3a3a3a" stroke-width="0.9" fill="none"/><path d="M8.6 104.5L8.6 105.9L7.2 105.9Z" fill="#333"/><path d="M18.1 104.5L18.1 105.9L16.7 105.9Z" fill="#333"/><path d="M2 108.5L6.5 110.0L5 114.0L1.5 113.5Z" fill="#2f5fd0" stroke="#1c3a9a" stroke-width="0.4"/><path d="M2.5 110.5L5 111.5" stroke="#cde" stroke-width="0.5"/><path d="M12 111.5L15 108.5L17.5 111.0L15 114.5Z" fill="#9ab8e8" stroke="#456" stroke-width="0.4"/><path d="M13 112.5L16 109.5" stroke="#2f5fd0" stroke-width="0.9"/><path d="M8.6 114.5L8.6 115.9L7.2 115.9Z" fill="#333"/><path d="M18.1 114.5L18.1 115.9L16.7 115.9Z" fill="#333"/><path d="M1.5 119.8L4.5 118.3L7.5 119.8L7.5 123.3L4.5 124.7L1.5 123.3Z" fill="#2f5fd0" stroke="#1c3a9a" stroke-width="0.4"/><path d="M1.5 119.8L4.5 121.3L7.5 119.8M4.5 121.3V124.7" stroke="#8fb0f0" stroke-width="0.4" fill="none"/><path d="M11 122.8L15 118.5Q17.5 117.8 17.6 120.3L13.6 124.5Q11 125.1 11 122.8Z" fill="#2f5fd0" stroke="#1c3a9a" stroke-width="0.4"/><ellipse cx="16" cy="120.0" rx="1.2" ry="1.6" fill="#9ec0ff" transform="rotate(45 16 120.0)"/><path d="M8.6 124.3L8.6 125.7L7.2 125.7Z" fill="#333"/><path d="M18.1 124.3L18.1 125.7L16.7 125.7Z" fill="#333"/><path d="M1.5 130Q4.5 132 7.5 130L7.5 133.5Q4.5 135 1.5 133.5Z" fill="#2f5fd0" stroke="#1c3a9a" stroke-width="0.4"/><path d="M2.5 128.5Q4.5 129.5 6.5 128.5" stroke="#555" stroke-width="0.4" fill="none"/><path d="M11 133L14 128L17.5 129.5L14.5 134.5Z" fill="#2f5fd0" stroke="#1c3a9a" stroke-width="0.4"/><path d="M12.5 131L16 130M13 132.6L15.5 131.6" stroke="#cfe0ff" stroke-width="0.4"/><path d="M8.6 134L8.6 135.4L7.2 135.4Z" fill="#333"/><path d="M18.1 134L18.1 135.4L16.7 135.4Z" fill="#333"/><path d="M1.5 143L4 139L5.5 141L7.5 144L4 145Z" fill="#f2a51a" stroke="#8a5a00" stroke-width="0.4"/><path d="M3 142L6.5 144.5" stroke="#444" stroke-width="0.7"/><path d="M11 145L12 139.5L13.5 142L15.5 138.5L16 142L17.6 140.5L16.8 145Z" fill="#f5b316" stroke="#b07000" stroke-width="0.4"/><path d="M8.6 145L8.6 146.4L7.2 146.4Z" fill="#333"/><path d="M18.1 145L18.1 146.4L16.7 146.4Z" fill="#333"/><path d="M1.5 154.5L7.5 154.5" stroke="#888" stroke-width="0.5"/><path d="M4 154Q5 149 6.5 149" stroke="#1c3a9a" stroke-width="1" fill="none"/><circle cx="2.8" cy="153.6" r="0.7" fill="#333"/><path d="M10.8 154.5L17.8 154.5" stroke="#888" stroke-width="0.5"/><path d="M13.5 154Q14.5 149 16 149" stroke="#1c3a9a" stroke-width="1" fill="none"/><path d="M11.5 154.5Q14 152.5 17 154.5" stroke="#555" stroke-width="0.4" fill="none"/><path d="M1.5 165.0Q1.5 160.0 4.5 159.5Q7.5 160.5 7.5 165.0Z" fill="#222"/><circle cx="4.5" cy="163.1" r="1.2" fill="#ddd"/><path d="M11 165.0Q11 160.5 14 159.5Q17 160.5 17 165.0Z" fill="#ddd" stroke="#999" stroke-width="0.4"/><circle cx="14" cy="161.7" r="1.2" fill="#6a8ee0"/><circle cx="15.5" cy="164.1" r="1.2" fill="#0b2a9a"/><path d="M8.6 165.5L8.6 166.9L7.2 166.9Z" fill="#333"/><path d="M1.5 170.5Q6.5 169.5 7 176" stroke="#3a3a3a" stroke-width="0.6" fill="none"/><path d="M11 170L13 171Q15 173 16 175L17.6 176.5" stroke="#3a3a3a" stroke-width="0.9" fill="none"/><path d="M8.6 176L8.6 177.4L7.2 177.4Z" fill="#333"/><path d="M18.1 176L18.1 177.4L16.7 177.4Z" fill="#333"/><path d="M2 180H7M4.5 180V186" stroke="#2f5fd0" stroke-width="1.4"/><path d="M2.5 179.5H6.5" stroke="#113" stroke-width="0.4"/><path d="M11 185.5L17.2 180.5" stroke="#555" stroke-width="0.5"/><rect x="11" y="184" width="1.8" height="1.8" fill="none" stroke="#333" stroke-width="0.4"/><rect x="15.6" y="179.6" width="1.8" height="1.8" fill="none" stroke="#333" stroke-width="0.4"/><path d="M18.1 186L18.1 187.4L16.7 187.4Z" fill="#333"/><rect x="1.5" y="189.7" width="2.2" height="2.2" fill="#2f5fd0"/><rect x="5" y="191.7" width="2.2" height="2.2" fill="#2f5fd0"/><rect x="1.5" y="193.89999999999998" width="2.2" height="2.2" fill="#2f5fd0"/><path d="M3.7 190.7L5 192.7M3.7 194.7L5 192.7" stroke="#333" stroke-width="0.4"/><path d="M11.5 189.7L12.5 195.7" stroke="#777" stroke-width="0.5"/><path d="M13 194.7L17 190.7" stroke="#2f5fd0" stroke-width="1.5"/><path d="M8.6 195.7L8.6 197.1L7.2 197.1Z" fill="#333"/><path d="M18.1 195.7L18.1 197.1L16.7 197.1Z" fill="#333"/><circle cx="4.4" cy="202.7" r="3.2" fill="#2f5fd0" stroke="#1c3a9a" stroke-width="0.4"/><path d="M2.8 201.1Q4 200.1 5.8 200.89999999999998" stroke="#cfe0ff" stroke-width="0.7" fill="none"/><rect x="3" y="202.7" width="2.8" height="2" fill="#fff"/><path d="M11 203.7H18M11 205.2H18" stroke="#2f5fd0" stroke-width="0.9"/><path d="M12 202.2Q14.5 199.7 17 202.2" stroke="#bbb" stroke-width="0.5" fill="none"/><path d="M8.6 205.7L8.6 207.1L7.2 207.1Z" fill="#333"/><path d="M18.1 205.7L18.1 207.1L16.7 207.1Z" fill="#333"/><path d="M1.5 209.5V215.5M1.5 209.5H7.2" stroke="#3a4ea0" stroke-width="0.5"/><path d="M3.4 209.5V215.5M1.5 211.5H7.2" stroke="#3a4ea0" stroke-width="0.5"/><path d="M5.3 209.5V215.5M1.5 213.5H7.2" stroke="#3a4ea0" stroke-width="0.5"/><path d="M7.199999999999999 209.5V215.5M1.5 215.5H7.2" stroke="#3a4ea0" stroke-width="0.5"/><path d="M13 209.5H16M13 215.5H16M13.5 210.0Q12.5 212.5 13.5 215.0M15.5 210.0Q16.5 212.5 15.5 215.0" stroke="#d03030" stroke-width="0.7" fill="none"/><path d="M8.6 215.5L8.6 216.9L7.2 216.9Z" fill="#333"/><path d="M18.1 215.5L18.1 216.9L16.7 216.9Z" fill="#333"/><path d="M2 220.5L7 220L6.5 226L2 225.5Z" fill="#fff" stroke="#444" stroke-width="0.5"/><path d="M3 225L6 221" stroke="#2f5fd0" stroke-width="1.3"/><path d="M11.5 223L13.5 225.5L17.5 220" stroke="#111" stroke-width="0.8" fill="none"/><path d="M8.6 226L8.6 227.4L7.2 227.4Z" fill="#333"/><path d="M18.1 226L18.1 227.4L16.7 227.4Z" fill="#333"/><path d="M1.2 235L4 231L7.5 234L4.5 236Z" fill="#ddd" stroke="#444" stroke-width="0.5"/><path d="M2.5 233L6.5 234.5" stroke="#444" stroke-width="0.4"/><path d="M11 235.5Q13.5 230.5 17.5 235.5Z" fill="#f5b316" stroke="#a06a00" stroke-width="0.4"/><path d="M13 231L16 229.5" stroke="#777" stroke-width="0.5"/><path d="M8.6 236L8.6 237.4L7.2 237.4Z" fill="#333"/><path d="M18.1 236L18.1 237.4L16.7 237.4Z" fill="#333"/></svg>
<div class="ab" style="left:619px;top:53px;width:2px;height:337px;background:#f4f5f8;"></div>
<div class="ab" style="left:621px;top:55px;width:69px;height:340.5px;background:#f5f6f8;border:0.6px solid #d6d9df"></div>
<div class="ab" style="left:621.3px;top:55.3px;width:68.4px;height:9px;background:#e9eaee;"></div>
<svg class="ab" style="left:0;top:0" width="690" height="80" viewBox="0 0 690 80"><circle cx="625.3" cy="60.7" r="2.5" fill="#e33"/><path d="M625.3 60.7L625.3 58.2A2.5 2.5 0 0 1 627.8 60.7Z" fill="#fc2"/><path d="M625.3 60.7L627.8 60.7A2.5 2.5 0 0 1 625.3 63.2Z" fill="#3c3"/><path d="M625.3 60.7L625.3 63.2A2.5 2.5 0 0 1 622.8 60.7Z" fill="#36e"/><circle cx="625.3" cy="60.7" r="1.1" fill="#fff"/><path d="M629 58.4L633.8 58.6L634 61.6L631.5 63.4L629.2 61.8Z" fill="#e8401a"/><path d="M630 59.2H633V60.8H630Z" fill="#f7b02a"/><path d="M629.4 62Q631.5 63.8 633.8 61.8" stroke="#1c3fa8" stroke-width="0.9" fill="none"/><circle cx="638.2" cy="61.2" r="2.2" fill="#1f3fb8"/><circle cx="637.5" cy="60.4" r="0.8" fill="#cfe0ff"/><path d="M639.6 59L640.8 57.8" stroke="#333" stroke-width="0.6"/><path d="M642.8 62.8L646.4 58.4" stroke="#aaa" stroke-width="1.2"/><path d="M644.8 60.4L645.8 59.2" stroke="#e33" stroke-width="1.2"/><path d="M648.4 59.6H650.4L651 60.2H653.4V62.8H648.4Z" fill="#f0a81c" stroke="#a86a00" stroke-width="0.35"/><rect x="655.2" y="58.2" width="5" height="5" fill="#5a84dc"/><path d="M655.4 60.7H660M657.7 58.4V63" stroke="#e8f0ff" stroke-width="0.6"/><rect x="661.6" y="58.4" width="5.4" height="4" rx="0.6" fill="#eee" stroke="#222" stroke-width="0.8"/><path d="M663.2 63.4H665.4" stroke="#222" stroke-width="0.7"/><circle cx="686.6" cy="60.8" r="2.1" fill="none" stroke="#a4a6ac" stroke-width="0.7"/><rect x="622.8" y="65.2" width="9.6" height="9.6" fill="#bcd2ee" stroke="#7fa6d8" stroke-width="0.6"/><path d="M624.2 72.6V69.2Q624.2 68.4 625 68.4H626L626.8 67.2H629.2L630 68.4H630.6Q631.2 68.4 631.2 69.2V72.6Z" fill="#2a2a2a"/><circle cx="628" cy="70.5" r="1.4" fill="#666" stroke="#111" stroke-width="0.4"/><rect x="634.2" y="65.2" width="9.4" height="9.6" fill="#c0d2ea" stroke="#7c8593" stroke-width="0.7"/><rect x="635.8" y="67.4" width="6.2" height="5" fill="#fff" stroke="#e06060" stroke-width="0.8"/><rect x="645.2" y="65.2" width="9.4" height="9.6" fill="#eceef1" stroke="#dcdee2" stroke-width="0.5"/><path d="M647 72.6L653 67.2" stroke="#1f3fb8" stroke-width="1.4"/><circle cx="647.8" cy="71.8" r="1.4" fill="#1a35a8"/><circle cx="650" cy="69.8" r="1.2" fill="#1f3fb8"/><circle cx="652.2" cy="67.8" r="1.2" fill="#1f3fb8"/><circle cx="647.4" cy="71.3" r="0.4" fill="#9ab"/></svg>
<div class="ab" style="left:622px;top:78.8px;width:66px;height:7px;background:#f1f2f5;"></div>
<div class="t" style="left:624.5px;top:79.3px;font-size:5.2px;color:#000;letter-spacing:-0.13px;-webkit-text-stroke:0">Viewport</div>
<div class="ab" style="left:622px;top:86px;width:7px;height:7.5px;background:#eef0f3;"></div>
<div class="ab" style="left:629px;top:86px;width:27px;height:7.5px;background:#ffffff;border-bottom:0.5px solid #e6e8ec;border-right:0.5px solid #e6e8ec"></div>
<div class="ab" style="left:656px;top:86px;width:31.5px;height:7.5px;background:#ffffff;border-bottom:0.5px solid #e6e8ec"></div>
<div class="t" style="left:631px;top:87.1px;font-size:4.5px;color:#000;-webkit-text-stroke:0;letter-spacing:-0.08px">Title</div>
<div class="t" style="left:657px;top:87.1px;font-size:4.5px;color:#000;-webkit-text-stroke:0;letter-spacing:-0.08px">Perspective</div>
<div class="ab" style="left:622px;top:93.5px;width:7px;height:7.5px;background:#eef0f3;"></div>
<div class="ab" style="left:629px;top:93.5px;width:27px;height:7.5px;background:#ffffff;border-bottom:0.5px solid #e6e8ec;border-right:0.5px solid #e6e8ec"></div>
<div class="ab" style="left:656px;top:93.5px;width:31.5px;height:7.5px;background:#ffffff;border-bottom:0.5px solid #e6e8ec"></div>
<div class="t" style="left:631px;top:94.6px;font-size:4.5px;color:#000;-webkit-text-stroke:0;letter-spacing:-0.08px">Width</div>
<div class="t" style="left:657px;top:94.6px;font-size:4.5px;color:#000;-webkit-text-stroke:0;letter-spacing:-0.08px">825</div>
<div class="ab" style="left:622px;top:101.0px;width:7px;height:7.5px;background:#eef0f3;"></div>
<div class="ab" style="left:629px;top:101.0px;width:27px;height:7.5px;background:#ffffff;border-bottom:0.5px solid #e6e8ec;border-right:0.5px solid #e6e8ec"></div>
<div class="ab" style="left:656px;top:101.0px;width:31.5px;height:7.5px;background:#ffffff;border-bottom:0.5px solid #e6e8ec"></div>
<div class="t" style="left:631px;top:102.1px;font-size:4.5px;color:#000;-webkit-text-stroke:0;letter-spacing:-0.08px">Height</div>
<div class="t" style="left:657px;top:102.1px;font-size:4.5px;color:#000;-webkit-text-stroke:0;letter-spacing:-0.08px">463</div>
<div class="ab" style="left:622px;top:108.5px;width:7px;height:7.5px;background:#eef0f3;"></div>
<div class="ab" style="left:629px;top:108.5px;width:27px;height:7.5px;background:#ffffff;border-bottom:0.5px solid #e6e8ec;border-right:0.5px solid #e6e8ec"></div>
<div class="ab" style="left:656px;top:108.5px;width:31.5px;height:7.5px;background:#ffffff;border-bottom:0.5px solid #e6e8ec"></div>
<div class="t" style="left:631px;top:109.6px;font-size:4.5px;color:#000;-webkit-text-stroke:0;letter-spacing:-0.08px">Projection</div>
<div class="t" style="left:657px;top:109.6px;font-size:4.5px;color:#000;-webkit-text-stroke:0;letter-spacing:-0.08px">Perspective</div>
<div class="ab" style="left:680.5px;top:109.4px;width:6.5px;height:5.8px;background:#e8e9ec;border:0.5px solid #b9bcc3"></div>
<svg class="ab" style="left:681.5px;top:111.1px" width="5" height="3" viewBox="0 0 5 3"><path d="M1 0.5L2.5 2L4 0.5" stroke="#444" stroke-width="0.5" fill="none"/></svg>
<div class="ab" style="left:622px;top:118.8px;width:66px;height:7px;background:#f1f2f5;"></div>
<div class="t" style="left:624.5px;top:119.3px;font-size:5.2px;color:#000;letter-spacing:-0.13px;-webkit-text-stroke:0">Camera</div>
<div class="ab" style="left:622px;top:126.2px;width:7px;height:7.5px;background:#eef0f3;"></div>
<div class="ab" style="left:629px;top:126.2px;width:27px;height:7.5px;background:#ffffff;border-bottom:0.5px solid #e6e8ec;border-right:0.5px solid #e6e8ec"></div>
<div class="ab" style="left:656px;top:126.2px;width:31.5px;height:7.5px;background:#ffffff;border-bottom:0.5px solid #e6e8ec"></div>
<div class="t" style="left:631px;top:127.3px;font-size:4.5px;color:#000;-webkit-text-stroke:0;letter-spacing:-0.08px">Lens Length</div>
<div class="t" style="left:657px;top:127.3px;font-size:4.5px;color:#000;-webkit-text-stroke:0;letter-spacing:-0.08px">50.0</div>
<div class="ab" style="left:622px;top:133.65px;width:7px;height:7.5px;background:#eef0f3;"></div>
<div class="ab" style="left:629px;top:133.65px;width:27px;height:7.5px;background:#ffffff;border-bottom:0.5px solid #e6e8ec;border-right:0.5px solid #e6e8ec"></div>
<div class="ab" style="left:656px;top:133.65px;width:31.5px;height:7.5px;background:#ffffff;border-bottom:0.5px solid #e6e8ec"></div>
<div class="t" style="left:631px;top:134.75px;font-size:4.5px;color:#000;-webkit-text-stroke:0;letter-spacing:-0.08px">Rotation</div>
<div class="t" style="left:657px;top:134.75px;font-size:4.5px;color:#000;-webkit-text-stroke:0;letter-spacing:-0.08px">0.0</div>
<div class="ab" style="left:622px;top:141.1px;width:7px;height:7.5px;background:#eef0f3;"></div>
<div class="ab" style="left:629px;top:141.1px;width:27px;height:7.5px;background:#ffffff;border-bottom:0.5px solid #e6e8ec;border-right:0.5px solid #e6e8ec"></div>
<div class="ab" style="left:656px;top:141.1px;width:31.5px;height:7.5px;background:#ffffff;border-bottom:0.5px solid #e6e8ec"></div>
<div class="t" style="left:631px;top:142.2px;font-size:4.5px;color:#000;-webkit-text-stroke:0;letter-spacing:-0.08px">X Location</div>
<div class="t" style="left:657px;top:142.2px;font-size:4.5px;color:#000;-webkit-text-stroke:0;letter-spacing:-0.08px">43.111</div>
<div class="ab" style="left:622px;top:148.54999999999998px;width:7px;height:7.5px;background:#eef0f3;"></div>
<div class="ab" style="left:629px;top:148.54999999999998px;width:27px;height:7.5px;background:#ffffff;border-bottom:0.5px solid #e6e8ec;border-right:0.5px solid #e6e8ec"></div>
<div class="ab" style="left:656px;top:148.54999999999998px;width:31.5px;height:7.5px;background:#ffffff;border-bottom:0.5px solid #e6e8ec"></div>
<div class="t" style="left:631px;top:149.64999999999998px;font-size:4.5px;color:#000;-webkit-text-stroke:0;letter-spacing:-0.08px">Y Location</div>
<div class="t" style="left:657px;top:149.64999999999998px;font-size:4.5px;color:#000;-webkit-text-stroke:0;letter-spacing:-0.08px">-74.673</div>
<div class="ab" style="left:622px;top:155.99999999999997px;width:7px;height:7.5px;background:#eef0f3;"></div>
<div class="ab" style="left:629px;top:155.99999999999997px;width:27px;height:7.5px;background:#ffffff;border-bottom:0.5px solid #e6e8ec;border-right:0.5px solid #e6e8ec"></div>
<div class="ab" style="left:656px;top:155.99999999999997px;width:31.5px;height:7.5px;background:#ffffff;border-bottom:0.5px solid #e6e8ec"></div>
<div class="t" style="left:631px;top:157.09999999999997px;font-size:4.5px;color:#000;-webkit-text-stroke:0;letter-spacing:-0.08px">Z Location</div>
<div class="t" style="left:657px;top:157.09999999999997px;font-size:4.5px;color:#000;-webkit-text-stroke:0;letter-spacing:-0.08px">49.782</div>
<div class="ab" style="left:622px;top:163.44999999999996px;width:7px;height:7.5px;background:#eef0f3;"></div>
<div class="ab" style="left:629px;top:163.44999999999996px;width:27px;height:7.5px;background:#ffffff;border-bottom:0.5px solid #e6e8ec;border-right:0.5px solid #e6e8ec"></div>
<div class="ab" style="left:656px;top:163.44999999999996px;width:31.5px;height:7.5px;background:#e9eaec;border-bottom:0.5px solid #e6e8ec"></div>
<div class="t" style="left:631px;top:164.54999999999995px;font-size:4.5px;color:#000;-webkit-text-stroke:0;letter-spacing:-0.08px">Distance t...</div>
<div class="t" style="left:657px;top:164.54999999999995px;font-size:4.5px;color:#000;-webkit-text-stroke:0;letter-spacing:-0.08px">99.564</div>
<div class="ab" style="left:622px;top:170.89999999999995px;width:7px;height:7.5px;background:#eef0f3;"></div>
<div class="ab" style="left:629px;top:170.89999999999995px;width:27px;height:7.5px;background:#ffffff;border-bottom:0.5px solid #e6e8ec;border-right:0.5px solid #e6e8ec"></div>
<div class="ab" style="left:656px;top:170.89999999999995px;width:31.5px;height:7.5px;background:#ffffff;border-bottom:0.5px solid #e6e8ec"></div>
<div class="t" style="left:631px;top:171.99999999999994px;font-size:4.5px;color:#000;-webkit-text-stroke:0;letter-spacing:-0.08px">Location</div>
<div class="ab" style="left:656.5px;top:171.69999999999996px;width:30px;height:6px;background:#e5e6e9;border:0.5px solid #b9bcc3"></div>
<div class="t" style="left:666.5px;top:172.19999999999996px;font-size:4.5px;color:#000;letter-spacing:-0.13px;">Place...</div>
<div class="ab" style="left:622px;top:180.8px;width:66px;height:7px;background:#f1f2f5;"></div>
<div class="t" style="left:624.5px;top:181.3px;font-size:5.2px;color:#000;letter-spacing:-0.13px;-webkit-text-stroke:0">Target</div>
<div class="ab" style="left:622px;top:188px;width:7px;height:7.5px;background:#eef0f3;"></div>
<div class="ab" style="left:629px;top:188px;width:27px;height:7.5px;background:#ffffff;border-bottom:0.5px solid #e6e8ec;border-right:0.5px solid #e6e8ec"></div>
<div class="ab" style="left:656px;top:188px;width:31.5px;height:7.5px;background:#ffffff;border-bottom:0.5px solid #e6e8ec"></div>
<div class="t" style="left:631px;top:189.1px;font-size:4.5px;color:#000;-webkit-text-stroke:0;letter-spacing:-0.08px">X Target</div>
<div class="t" style="left:657px;top:189.1px;font-size:4.5px;color:#000;-webkit-text-stroke:0;letter-spacing:-0.08px">0.0</div>
<div class="ab" style="left:622px;top:195.6px;width:7px;height:7.5px;background:#eef0f3;"></div>
<div class="ab" style="left:629px;top:195.6px;width:27px;height:7.5px;background:#ffffff;border-bottom:0.5px solid #e6e8ec;border-right:0.5px solid #e6e8ec"></div>
<div class="ab" style="left:656px;top:195.6px;width:31.5px;height:7.5px;background:#ffffff;border-bottom:0.5px solid #e6e8ec"></div>
<div class="t" style="left:631px;top:196.7px;font-size:4.5px;color:#000;-webkit-text-stroke:0;letter-spacing:-0.08px">Y Target</div>
<div class="t" style="left:657px;top:196.7px;font-size:4.5px;color:#000;-webkit-text-stroke:0;letter-spacing:-0.08px">0.0</div>
<div class="ab" style="left:622px;top:203.2px;width:7px;height:7.5px;background:#eef0f3;"></div>
<div class="ab" style="left:629px;top:203.2px;width:27px;height:7.5px;background:#ffffff;border-bottom:0.5px solid #e6e8ec;border-right:0.5px solid #e6e8ec"></div>
<div class="ab" style="left:656px;top:203.2px;width:31.5px;height:7.5px;background:#ffffff;border-bottom:0.5px solid #e6e8ec"></div>
<div class="t" style="left:631px;top:204.29999999999998px;font-size:4.5px;color:#000;-webkit-text-stroke:0;letter-spacing:-0.08px">Z Target</div>
<div class="t" style="left:657px;top:204.29999999999998px;font-size:4.5px;color:#000;-webkit-text-stroke:0;letter-spacing:-0.08px">0.0</div>
<div class="ab" style="left:622px;top:210.79999999999998px;width:7px;height:7.5px;background:#eef0f3;"></div>
<div class="ab" style="left:629px;top:210.79999999999998px;width:27px;height:7.5px;background:#ffffff;border-bottom:0.5px solid #e6e8ec;border-right:0.5px solid #e6e8ec"></div>
<div class="ab" style="left:656px;top:210.79999999999998px;width:31.5px;height:7.5px;background:#ffffff;border-bottom:0.5px solid #e6e8ec"></div>
<div class="t" style="left:631px;top:211.89999999999998px;font-size:4.5px;color:#000;-webkit-text-stroke:0;letter-spacing:-0.08px">Location</div>
<div class="ab" style="left:656.5px;top:211.6px;width:30px;height:6px;background:#e5e6e9;border:0.5px solid #b9bcc3"></div>
<div class="t" style="left:666.5px;top:212.1px;font-size:4.5px;color:#000;letter-spacing:-0.13px;">Place...</div>
<div class="ab" style="left:622px;top:220.2px;width:66px;height:7px;background:#f1f2f5;"></div>
<div class="t" style="left:624.5px;top:220.7px;font-size:5.2px;color:#000;letter-spacing:-0.13px;-webkit-text-stroke:0">Wallpaper</div>
<div class="ab" style="left:622px;top:228px;width:7px;height:7.5px;background:#eef0f3;"></div>
<div class="ab" style="left:629px;top:228px;width:27px;height:7.5px;background:#ffffff;border-bottom:0.5px solid #e6e8ec;border-right:0.5px solid #e6e8ec"></div>
<div class="ab" style="left:656px;top:228px;width:31.5px;height:7.5px;background:#ffffff;border-bottom:0.5px solid #e6e8ec"></div>
<div class="t" style="left:631px;top:229.1px;font-size:4.5px;color:#000;-webkit-text-stroke:0;letter-spacing:-0.08px">Filename</div>
<div class="t" style="left:657px;top:229.1px;font-size:4.5px;color:#000;-webkit-text-stroke:0;letter-spacing:-0.08px">(none)</div>
<div class="ab" style="left:681px;top:229px;width:6px;height:5.5px;background:#e8e9ec;border:0.5px solid #b9bcc3"></div>
<div class="t" style="left:682.2px;top:229.2px;font-size:4.5px;color:#000;letter-spacing:-0.13px;">...</div>
<div class="ab" style="left:622px;top:235.8px;width:7px;height:7.5px;background:#eef0f3;"></div>
<div class="ab" style="left:629px;top:235.8px;width:27px;height:7.5px;background:#ffffff;border-bottom:0.5px solid #e6e8ec;border-right:0.5px solid #e6e8ec"></div>
<div class="ab" style="left:656px;top:235.8px;width:31.5px;height:7.5px;background:#ffffff;border-bottom:0.5px solid #e6e8ec"></div>
<div class="t" style="left:631px;top:236.9px;font-size:4.5px;color:#000;-webkit-text-stroke:0;letter-spacing:-0.08px">Show</div>
<svg class="ab" style="left:656px;top:236.8px" width="6" height="6" viewBox="0 0 6 6"><rect x="0.4" y="0.4" width="4.8" height="4.8" fill="#fff" stroke="#555" stroke-width="0.6"/><path d="M1.2 2.8L2.4 4L4.4 1.4" stroke="#333" stroke-width="0.6" fill="none"/></svg>
<div class="ab" style="left:622px;top:243.60000000000002px;width:7px;height:7.5px;background:#eef0f3;"></div>
<div class="ab" style="left:629px;top:243.60000000000002px;width:27px;height:7.5px;background:#ffffff;border-bottom:0.5px solid #e6e8ec;border-right:0.5px solid #e6e8ec"></div>
<div class="ab" style="left:656px;top:243.60000000000002px;width:31.5px;height:7.5px;background:#ffffff;border-bottom:0.5px solid #e6e8ec"></div>
<div class="t" style="left:631px;top:244.70000000000002px;font-size:4.5px;color:#000;-webkit-text-stroke:0;letter-spacing:-0.08px">Gray</div>
<svg class="ab" style="left:656px;top:244.60000000000002px" width="6" height="6" viewBox="0 0 6 6"><rect x="0.4" y="0.4" width="4.8" height="4.8" fill="#fff" stroke="#555" stroke-width="0.6"/><path d="M1.2 2.8L2.4 4L4.4 1.4" stroke="#333" stroke-width="0.6" fill="none"/></svg>
<div class="ab" style="left:22px;top:389px;width:598px;height:1.2px;background:#f6f7f9;"></div>
<div class="ab" style="left:23.6px;top:390px;width:25.4px;height:5.9px;background:#f7f8fa;border-radius:0 0 1.2px 1.2px"></div>
<div class="t" style="left:26px;top:390.6px;font-size:4.5px;color:#000;letter-spacing:-0.12px">Perspective</div>
<div class="ab" style="left:50.5px;top:390px;width:11.0px;height:5.9px;background:#dcdde2;border-radius:0 0 1.2px 1.2px"></div>
<div class="t" style="left:53px;top:390.6px;font-size:4.5px;color:#000;letter-spacing:-0.12px">Top</div>
<div class="ab" style="left:63px;top:390px;width:14px;height:5.9px;background:#dcdde2;border-radius:0 0 1.2px 1.2px"></div>
<div class="t" style="left:65.5px;top:390.6px;font-size:4.5px;color:#000;letter-spacing:-0.12px">Front</div>
<div class="ab" style="left:79px;top:390px;width:14px;height:5.9px;background:#dcdde2;border-radius:0 0 1.2px 1.2px"></div>
<div class="t" style="left:81px;top:390.6px;font-size:4.5px;color:#000;letter-spacing:-0.12px">Right</div>
<div class="ab" style="left:95px;top:390px;width:12px;height:5.9px;background:#dcdde2;border-radius:0 0 1.2px 1.2px"></div>
<div class="t" style="left:97px;top:390.6px;font-size:4.5px;color:#000;letter-spacing:-0.12px">Left</div>
<div class="ab" style="left:108px;top:390px;width:6px;height:5.9px;background:#dcdde2;border-radius:0 0 1.2px 1.2px"></div>
<svg class="ab" style="left:108px;top:390px" width="6" height="6" viewBox="0 0 6 6"><circle cx="3" cy="2.9" r="1.6" fill="none" stroke="#555" stroke-width="0.5"/><path d="M3 1.9V3.9M2 2.9H4" stroke="#555" stroke-width="0.5"/></svg>
<div class="t" style="left:7.5px;top:399.7px;font-size:4.5px;color:#000;letter-spacing:-0.13px;">End</div>
<div class="t" style="left:23px;top:399.7px;font-size:4.5px;color:#000;letter-spacing:-0.13px;">Near</div>
<div class="t" style="left:40px;top:399.7px;font-size:4.5px;color:#000;letter-spacing:-0.13px;">Point</div>
<div class="t" style="left:58.5px;top:399.7px;font-size:4.5px;color:#000;letter-spacing:-0.13px;">Mid</div>
<div class="t" style="left:74px;top:399.7px;font-size:4.5px;color:#000;letter-spacing:-0.13px;">Cen</div>
<div class="t" style="left:90.5px;top:399.7px;font-size:4.5px;color:#000;letter-spacing:-0.13px;">Int</div>
<div class="t" style="left:103.5px;top:399.7px;font-size:4.5px;color:#000;letter-spacing:-0.13px;">Perp</div>
<div class="t" style="left:120.5px;top:399.7px;font-size:4.5px;color:#000;letter-spacing:-0.13px;">Tan</div>
<div class="t" style="left:136px;top:399.7px;font-size:4.5px;color:#000;letter-spacing:-0.13px;">Quad</div>
<div class="t" style="left:155.5px;top:399.7px;font-size:4.5px;color:#000;letter-spacing:-0.13px;">Knot</div>
<div class="t" style="left:171.5px;top:399.7px;font-size:4.5px;color:#000;letter-spacing:-0.13px;">Vertex</div>
<div class="t" style="left:192px;top:399.7px;font-size:4.5px;color:#8a8a8a;letter-spacing:-0.13px;">Project</div>
<div class="t" style="left:216px;top:399.7px;font-size:4.5px;color:#8a8a8a;letter-spacing:-0.13px;">Disable</div>
<svg class="ab" style="left:0;top:0" width="240" height="405" viewBox="0 0 240 405"><rect x="2.25" y="400.35" width="3.9" height="4" fill="#fff" stroke="#555" stroke-width="0.5"/><path d="M2.9 401.9L4.0 403.3L5.8 400.7" stroke="#222" stroke-width="0.65" fill="none"/><rect x="17.45" y="400.35" width="3.9" height="4" fill="#fff" stroke="#555" stroke-width="0.5"/><path d="M18.099999999999998 401.9L19.2 403.3L21.0 400.7" stroke="#222" stroke-width="0.65" fill="none"/><rect x="34.75" y="400.35" width="3.9" height="4" fill="#fff" stroke="#555" stroke-width="0.5"/><path d="M35.4 401.9L36.5 403.3L38.3 400.7" stroke="#222" stroke-width="0.65" fill="none"/><rect x="52.75" y="400.35" width="3.9" height="4" fill="#fff" stroke="#555" stroke-width="0.5"/><path d="M53.4 401.9L54.5 403.3L56.3 400.7" stroke="#222" stroke-width="0.65" fill="none"/><rect x="68.95" y="400.35" width="3.9" height="4" fill="#fff" stroke="#555" stroke-width="0.5"/><rect x="85.25" y="400.35" width="3.9" height="4" fill="#fff" stroke="#555" stroke-width="0.5"/><rect x="98.55" y="400.35" width="3.9" height="4" fill="#fff" stroke="#555" stroke-width="0.5"/><rect x="115.65" y="400.35" width="3.9" height="4" fill="#fff" stroke="#555" stroke-width="0.5"/><rect x="130.65" y="400.35" width="3.9" height="4" fill="#fff" stroke="#555" stroke-width="0.5"/><rect x="150.35" y="400.35" width="3.9" height="4" fill="#fff" stroke="#555" stroke-width="0.5"/><rect x="166.35" y="400.35" width="3.9" height="4" fill="#fff" stroke="#555" stroke-width="0.5"/><rect x="187.15" y="400.35" width="3.9" height="4" fill="#eceef1" stroke="#c5c8cd" stroke-width="0.5"/><rect x="211.55" y="400.35" width="3.9" height="4" fill="#eceef1" stroke="#c5c8cd" stroke-width="0.5"/></svg>
</body></html>
